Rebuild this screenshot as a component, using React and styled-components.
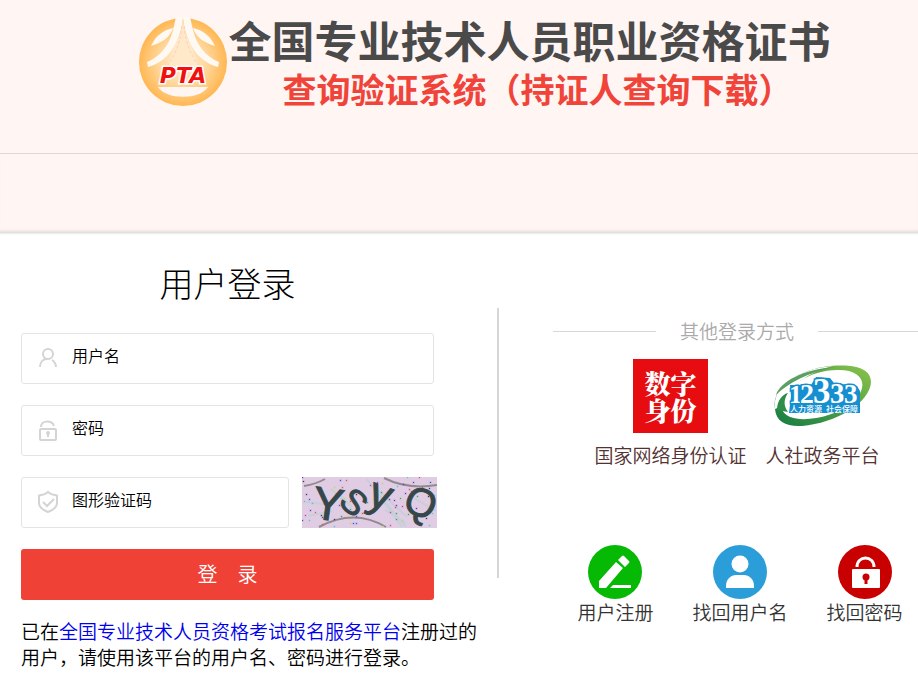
import React from "react";
import styled, { createGlobalStyle } from "styled-components";

const GlobalStyle = createGlobalStyle`
  * { box-sizing: border-box; }
  body {
    margin: 0;
    background: #fff;
    color: #000;
    font-family: "Noto Sans CJK SC", sans-serif;
    font-weight: 350;
    overflow-x: hidden;
  }
  h1, h2, p { margin: 0; }
`;

const Header = styled.header`
  display: flex;
  justify-content: center;
  padding: 16px 0 38px 50px;
  background: #fff5f2;
  border-bottom: 1px solid #ddd8d6;
`;

const Brand = styled.div`
  display: flex;
  align-items: flex-start;
`;

const BrandLogo = styled.svg`
  flex: none;
  width: 91px;
  height: 91px;
  margin-top: 1px;
`;

const SiteTitle = styled.h1`
  color: #4a4a4a;
  font-size: 43px;
  line-height: 46px;
  font-weight: 700;
  white-space: nowrap;
`;

const SiteSubtitle = styled.p`
  padding-left: 54px;
  color: #f0443a;
  font-size: 34px;
  line-height: 53px;
  font-weight: 700;
  white-space: nowrap;
`;

const Banner = styled.div`
  height: 79px;
  background: #fff5f2;
  border-bottom: 1px solid #dfdfdd;
  box-shadow: 0 1px 1px #eeeeee, inset 0 -3px 3px -2px #e4dad7;
`;

const Main = styled.main`
  display: grid;
  grid-template-columns: minmax(0, 499fr) minmax(0, 419fr);
`;

const LoginPanel = styled.section`
  padding: 30px 22px 10px 21px;
`;

const LoginForm = styled.form`
  display: flex;
  flex-direction: column;
  gap: 21px;
  margin-right: 41px;
`;

const Heading = styled.h2`
  margin-bottom: 9px;
  font-size: 34px;
  line-height: 40px;
  font-weight: 300;
  text-align: center;
`;

const Field = styled.label`
  display: flex;
  flex: ${(p) => (p.$grow ? "1" : "none")};
  min-width: 0;
  height: 51px;
  align-items: center;
  gap: 11px;
  padding: 0 13px;
  border: 1px solid #e4e4e4;
  border-radius: 3px;
`;

const FieldIcon = styled.svg`
  flex: none;
  width: 26px;
  height: 26px;
  fill: none;
  stroke: #d4d4d4;
  stroke-width: 2;
`;

const Input = styled.input`
  flex: 1;
  min-width: 0;
  height: 100%;
  padding: 0 0 7px;
  border: 0;
  outline: 0;
  background: none;
  font: inherit;
  font-size: 16px;
  color: #000;
  &::placeholder { color: #000; opacity: 1; }
`;

const CaptchaRow = styled.div`
  display: flex;
  gap: 13px;
  margin-right: -3px;
`;

const CaptchaButton = styled.button`
  flex: none;
  width: 135px;
  height: 51px;
  padding: 0;
  border: 0;
  background: #e0cde4;
  cursor: pointer;
  svg { display: block; }
`;

const SubmitButton = styled.button`
  height: 51px;
  padding: 0 0 2px;
  border: 0;
  border-radius: 3px;
  background: #ef4136;
  color: #fff;
  font: inherit;
  font-size: 20px;
  cursor: pointer;
`;

const Notice = styled.p`
  margin: 18px -4px 0 0;
  font-size: 19px;
  line-height: 26px;
`;

const NoticeLink = styled.a`
  color: #0000ee;
  text-decoration: none;
`;

const OtherPanel = styled.section`
  display: flex;
  flex-direction: column;
  margin-right: -3px;
  padding-top: 85px;
  padding-left: 54px;
`;

const Divided = styled.div`
  display: grid;
  grid-template-columns: minmax(0, 1fr) 2px;
`;

const Divider = styled.div`
  height: 270px;
  margin-top: 75px;
  background: #d6d6d6;
`;

const OtherTitle = styled.h2`
  display: flex;
  align-items: center;
  gap: 24px;
  color: #aaa;
  font-size: 19px;
  line-height: 26px;
  font-weight: 350;
  white-space: nowrap;
  &::before, &::after {
    content: "";
    flex: 1;
    height: 1px;
    background: #d8d8d8;
  }
`;

const Links = styled.nav`
  display: flex;
  justify-content: center;
  gap: ${(p) => p.$gap}px;
  margin-top: ${(p) => p.$top}px;
  padding-left: ${(p) => p.$indent || 0}px;
`;

const IconLink = styled.a`
  display: flex;
  flex-direction: column;
  align-items: center;
  color: ${(p) => p.$color || "#333"};
  font-size: 19px;
  line-height: 26px;
  text-decoration: none;
  white-space: nowrap;
`;

const IdentityBadge = styled.span`
  display: grid;
  place-content: center;
  width: 75px;
  height: 74px;
  margin-bottom: 9px;
  background: #e60c10;
  color: #fff;
  font-family: "Noto Serif CJK SC", "Noto Sans CJK SC", sans-serif;
  font-size: 26px;
  line-height: 27px;
  font-weight: 900;
`;

const HotlineLogo = styled.svg`
  width: 100px;
  height: 74px;
  margin-bottom: 9px;
`;

const RoundIcon = styled.svg`
  width: 54px;
  height: 54px;
`;

const arches = [
  "M2 9Q14 7 23 2",
  "M82 1Q106 13 135 8",
  "M17 50Q52 31 84 50",
];
const scratches = [
  "M4 25L30 28", "M6 39L30 34", "M29 12L45 27", "M35 15L50 30", "M64 2L105 40",
  "M69 8L104 50", "M76 17L100 50", "M83 33L104 46", "M112 21L134 34",
];
const dotColors = ["#6d2fd0", "#d83a9d", "#32a852", "#c7d93a", "#2a5bd7", "#e0553b", "#333c4f", "#4cc9c9"];
const dots = Array.from({ length: 84 }, (_, i) => ({
  x: (i * 47 + ((i * i * 13) % 31)) % 133,
  y: (i * 29 + ((i * i * 7) % 17)) % 50,
  fill: dotColors[(i * 5 + (i >> 3)) % dotColors.length],
}));

function CaptchaImage() {
  return (
    <svg width="135" height="51" viewBox="0 0 135 51" aria-hidden="true">
      <g fill="none" stroke="#c6cfda" strokeWidth="2">
        {scratches.map((d) => <path key={d} d={d} />)}
      </g>
      <g fill="none" stroke="#918b90" strokeWidth="2">
        {arches.map((d) => <path key={d} d={d} />)}
      </g>
      {dots.map((d, i) => <rect key={i} x={d.x} y={d.y} width="1" height="1" fill={d.fill} stroke={d.fill} strokeOpacity=".3" />)}
      <g fill="#36474a" stroke="#36474a" fontFamily="Liberation Sans, sans-serif" textAnchor="middle">
        <text transform="translate(24 43) rotate(8)" fontSize="46">Y</text>
        <text transform="translate(44 34) rotate(42)" fontSize="35">S</text>
        <text transform="translate(74 31) rotate(20)" fontSize="44">y</text>
        <text transform="translate(113 38) rotate(25)" fontSize="40">Q</text>
      </g>
    </svg>
  );
}

function PtaLogo() {
  return (
    <BrandLogo viewBox="0 0 91 91" role="img" aria-label="PTA">
      <defs>
        <radialGradient id="gold" cx="50%" cy="50%" r="50%">
          <stop offset="0" stopColor="#fff0d8" />
          <stop offset=".55" stopColor="#ffd79c" />
          <stop offset="1" stopColor="#ffb752" />
        </radialGradient>
      </defs>
      <circle cx="45" cy="45" r="44" fill="url(#gold)" />
      <path d="M13 29C18 18 26 13 35 11C32 21 23 26 13 29M77 29C72 18 64 13 55 11C58 21 67 26 77 29" fill="#fff9f3" />
      <path d="M38 0L35 13C31 30 21 40 9 45L10 50C28 45 39 31 44 8L45 1L46 8C51 31 62 45 80 50L81 45C69 40 59 30 55 13L52 0Z" fill="#fff9f3" />
      <path d="M45 1C44 16 39 23 36 30L30 48H60L54 30C51 23 46 16 45 1Z" fill="#ffe9c9" />
      <path d="M44 9C42 28 36 39 30 48M46 9C48 28 54 39 60 48" fill="none" stroke="#ffcdbd" strokeWidth="1" strokeDasharray="3 2" />
      <path d="M20 70H70C62 83 28 83 20 70Z" fill="#fff5f2" />
      <path d="M20 69H70" stroke="#ffce8a" />
      <text x="45" y="66" textAnchor="middle" fill="#f01010" stroke="#fff" strokeWidth="3" paintOrder="stroke" fontFamily="DejaVu Sans, sans-serif" fontSize="22" fontWeight="700" fontStyle="italic">PTA</text>
    </BrandLogo>
  );
}

function Hotline() {
  return (
    <HotlineLogo viewBox="0 0 100 74" role="img" aria-label="12333">
      <defs>
        <linearGradient id="leaf" x1="0" y1="1" x2="1" y2="0">
          <stop offset="0" stopColor="#137b43" />
          <stop offset="1" stopColor="#8bc34a" />
        </linearGradient>
      </defs>
      <path fillRule="evenodd" fill="url(#leaf)" d="M2 50C-2 28 26 12 50 8C78 4 98 8 98 23C97 44 63 64 29 67C14 68 3 63 2 50ZM9 50C14 67 58 61 79 44C97 28 91 11 66 11C38 10 5 30 9 50Z" />
      <path d="M2 50C-1 26 26 10 60 7C35 14 15 26 9 47Z" fill="#fff" />
      <path d="M3 36C7 23 30 10 62 8C34 14 15 24 3 36Z" fill="#5d9e65" />
      <path d="M4 51C4 41 10 35 15 34C11 40 10 46 15 53Z" fill="#2e8d48" />
      <path d="M17 26H38L43 18L57 19L61 24L84 27L87 32V54H16L18 37Z" fill="#168fd1" />
      <text y="44" fontFamily="Liberation Serif, serif" fontWeight="700" fill="#fff" stroke="#168fd1" strokeWidth="3" paintOrder="stroke">
        <tspan x="16" fontSize="26">1</tspan>
        <tspan x="27" fontSize="28">2</tspan>
        <tspan x="40" fontSize="35">3</tspan>
        <tspan x="57" fontSize="29">3</tspan>
        <tspan x="71" fontSize="27">3</tspan>
      </text>
      <text x="17" y="53" fontSize="8" fontWeight="500" fill="#fff">人力资源<tspan x="53">社会保障</tspan></text>
    </HotlineLogo>
  );
}

export default function App() {
  return (
    <>
      <GlobalStyle />
      <Header>
        <Brand>
          <PtaLogo />
          <div>
            <SiteTitle>全国专业技术人员职业资格证书</SiteTitle>
            <SiteSubtitle>查询验证系统（持证人查询下载）</SiteSubtitle>
          </div>
        </Brand>
      </Header>
      <Banner />
      <Main>
        <Divided>
          <LoginPanel>
            <LoginForm onSubmit={(e) => e.preventDefault()}>
              <Heading>用户登录</Heading>
              <Field>
                <FieldIcon viewBox="0 0 26 26" aria-hidden="true">
                  <circle cx="13" cy="8" r="5" />
                  <path d="M5 21C5 16 8 13 12 13M17 14C20 16 21 18 21 21" />
                </FieldIcon>
                <Input type="text" aria-label="用户名" placeholder="用户名" />
              </Field>
              <Field>
                <FieldIcon viewBox="0 0 26 26" aria-hidden="true">
                  <rect x="5" y="11" width="16" height="11" rx="1" />
                  <path d="M6 9C6 2 17 2 19 8M13 15V19" />
                  <circle cx="13" cy="15" r="1" />
                </FieldIcon>
                <Input type="password" aria-label="密码" placeholder="密码" />
              </Field>
              <CaptchaRow>
                <Field $grow>
                  <FieldIcon viewBox="0 0 26 26" aria-hidden="true">
                    <path d="M13 2C10 5 7 5 4 5.500V13C4 17 8 20 13 22C18 20 22 17 22 13V5.500C19 5 16 5 13 2Z" />
                    <path d="M8 12L12 16L19 9" />
                  </FieldIcon>
                  <Input type="text" aria-label="图形验证码" placeholder="图形验证码" />
                </Field>
                <CaptchaButton type="button" aria-label="图形验证码"><CaptchaImage /></CaptchaButton>
              </CaptchaRow>
              <SubmitButton type="submit">登　录</SubmitButton>
            </LoginForm>
            <Notice>
              已在<NoticeLink href="#platform">全国专业技术人员资格考试报名服务平台</NoticeLink>注册过的用户，请使用该平台的用户名、密码进行登录。
            </Notice>
          </LoginPanel>
          <Divider />
        </Divided>
        <OtherPanel>
          <OtherTitle>其他登录方式</OtherTitle>
          <Links $gap={19} $top={15}>
            <IconLink href="#identity" $color="#533232">
              <IdentityBadge aria-hidden="true"><span>数字</span><span>身份</span></IdentityBadge>
              国家网络身份认证
            </IconLink>
            <IconLink href="#hotline" $color="#533232">
              <Hotline />
              人社政务平台
            </IconLink>
          </Links>
          <Links $gap={39} $top={77} $indent={6}>
            <IconLink href="#register">
              <RoundIcon viewBox="0 0 54 54" aria-hidden="true">
                <circle cx="27" cy="27" r="27" fill="#05b905" />
                <path d="M11 43V36L28 17L35 23L18 43ZM30 15L34 11Q35 10 36 11L41 16Q42 17 41 18L37 22ZM22 43L25 40H43V43Z" fill="#fff" />
              </RoundIcon>
              用户注册
            </IconLink>
            <IconLink href="#username">
              <RoundIcon viewBox="0 0 54 54" aria-hidden="true">
                <circle cx="27" cy="27" r="27" fill="#2b9dd8" />
                <circle cx="27" cy="19" r="8.500" fill="#fff" />
                <path d="M13 43V41C13 34 18 30 23 30H31C36 30 41 34 41 41V43Z" fill="#fff" />
              </RoundIcon>
              找回用户名
            </IconLink>
            <IconLink href="#password">
              <RoundIcon viewBox="0 0 54 54" aria-hidden="true">
                <circle cx="27" cy="27" r="27" fill="#c90000" />
                <path d="M19 22C19 10 36 10 36 22" fill="none" stroke="#fff" strokeWidth="3" />
                <rect x="14" y="24" width="28" height="19" rx="1" fill="#fff" />
                <circle cx="28" cy="32" r="3.500" fill="#c90000" />
                <path d="M28 32V39" stroke="#c90000" strokeWidth="3" />
              </RoundIcon>
              找回密码
            </IconLink>
          </Links>
        </OtherPanel>
      </Main>
    </>
  );
}
